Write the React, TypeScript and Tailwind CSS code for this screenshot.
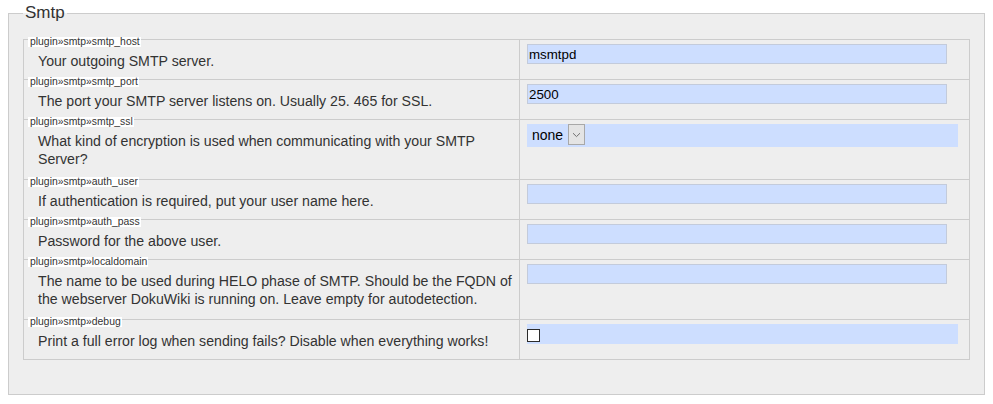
import React from "react";

type Row = {
  k: string;
  lines: string[];
  kind: "text" | "select" | "check";
  value?: string;
};

const rows: Row[] = [
  { k: "plugin»smtp»smtp_host", lines: ["Your outgoing SMTP server."], kind: "text", value: "msmtpd" },
  { k: "plugin»smtp»smtp_port", lines: ["The port your SMTP server listens on. Usually 25. 465 for SSL."], kind: "text", value: "2500" },
  {
    k: "plugin»smtp»smtp_ssl",
    lines: ["What kind of encryption is used when communicating with your SMTP", "Server?"],
    kind: "select",
  },
  { k: "plugin»smtp»auth_user", lines: ["If authentication is required, put your user name here."], kind: "text", value: "" },
  { k: "plugin»smtp»auth_pass", lines: ["Password for the above user."], kind: "text", value: "" },
  {
    k: "plugin»smtp»localdomain",
    lines: [
      "The name to be used during HELO phase of SMTP. Should be the FQDN of",
      "the webserver DokuWiki is running on. Leave empty for autodetection.",
    ],
    kind: "text",
    value: "",
  },
  { k: "plugin»smtp»debug", lines: ["Print a full error log when sending fails? Disable when everything works!"], kind: "check" },
];

function Value({ row }: { row: Row }) {
  if (row.kind === "text") {
    return (
      <input
        readOnly
        value={row.value}
        className="box-border block w-[420px] h-[20px] border border-[#c3cbdb] bg-[#cddeff] px-[1px] text-[13.33px] leading-[18px] text-black outline-none font-['Liberation_Sans',Arial,sans-serif]"
      />
    );
  }
  if (row.kind === "select") {
    return (
      <div className="flex w-[431px] h-[23px] bg-[#cddeff]">
        <div className="flex items-start">
          <span className="pl-[5px] pr-[5px] text-[14px] leading-[22px] text-black">none</span>
          <span className="box-border flex items-center justify-center w-[17px] h-[21px] border border-[#a8a8a8] bg-[#e4e4e4]">
            <svg width="9" height="6" viewBox="0 0 9 6">
              <path d="M1 1.2 L4.5 4.6 L8 1.2" fill="none" stroke="#707070" strokeWidth="1" />
            </svg>
          </span>
        </div>
      </div>
    );
  }
  return (
    <div className="w-[431px] h-[20px] bg-[#cddeff] pt-[5px]">
      <div className="box-border w-[13px] h-[13px] border-[1.5px] border-[#2b2b2b] bg-white" />
    </div>
  );
}

export default function App() {
  return (
    <div className="w-[993px] h-[404px] bg-white px-[8px] pt-[3px] text-[#333] font-['Liberation_Sans',Arial,sans-serif]">
      <fieldset className="border border-[#cccccc] bg-[#eeeeee] pl-[14px] pr-[14px] pb-[34px]">
        <legend className="px-[2px] text-[17px] leading-[20px] text-[#333]">Smtp</legend>
        <div className="mt-[16px] border-x border-b border-[#cccccc]">
          {rows.map((row) => (
            <div
              key={row.k}
              className={
                row.lines.length === 2
                  ? "flex h-[60px] border-t border-[#cccccc]"
                  : "flex h-[40px] border-t border-[#cccccc]"
              }
            >
              <div className="w-[496px] shrink-0 border-r border-[#cccccc]">
                <div className="-mt-[3px] ml-[4px] w-fit h-[10px] bg-white pl-[2px] pr-[1px] text-[10.4px] leading-[10px] text-[#333] whitespace-nowrap">
                  {row.k}
                </div>
                <p className="pt-[5px] pl-[14px] text-[14.15px] leading-[18px] text-[#333] whitespace-nowrap">
                  {row.lines.map((l, i) => (
                    <React.Fragment key={i}>
                      {i > 0 && <br />}
                      {l}
                    </React.Fragment>
                  ))}
                </p>
              </div>
              <div className="flex-1 pl-[7px] pt-[4px]">
                <Value row={row} />
              </div>
            </div>
          ))}
        </div>
      </fieldset>
    </div>
  );
}
